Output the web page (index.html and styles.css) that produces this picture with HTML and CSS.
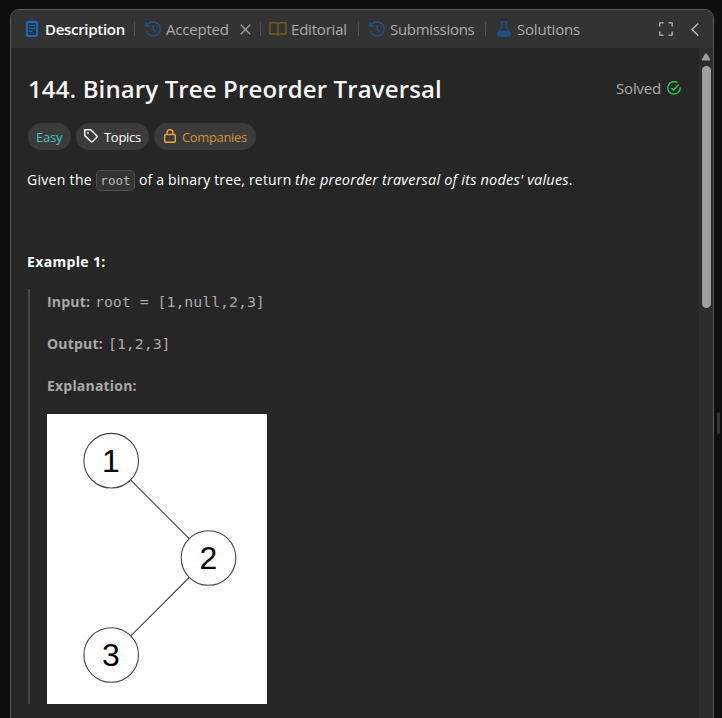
FILE: index.html
```html
<!DOCTYPE html>
<html lang="en">
<head>
<meta charset="utf-8">
<title>144. Binary Tree Preorder Traversal</title>
<link rel="stylesheet" href="styles.css">
</head>
<body>
<main class="panel">
  <header class="tabs">
    <div class="tab tab-description active">
      <svg width="12" height="16" viewBox="0 0 12 16" fill="none" stroke="#0a70dc"><rect x="1" y="1" width="10" height="14" rx="1.5" stroke-width="1.8"/><path d="M3 4.5h6M3 7.5h6M3 10.5h3.5" stroke-width="1.2"/></svg>
      <span>Description</span>
    </div>
    <div class="tab tab-accepted">
      <svg width="16" height="16" viewBox="0 0 16 16" fill="none" stroke="#20528a" stroke-width="1.5"><path d="M1.800 4.500C3.200 2 5.500 1 8.200 1a7 7 0 1 1-6.600 9.300M.8 1.200l.7 3.600 3.700.1M8.200 4.300v4l2.500 2.400"/></svg>
      <span>Accepted</span>
      <svg class="close" width="11" height="11" viewBox="0 0 11 11" fill="none" stroke="#9b9b9b" stroke-width="1.300"><path d="m.8.8 9.400 9.400M10.200.8.8 10.200"/></svg>
    </div>
    <div class="tab tab-editorial">
      <svg width="18" height="14" viewBox="0 0 18 14" fill="none" stroke="#765719" stroke-width="1.500" stroke-linejoin="round"><path d="M9 2.300C8.600 1.200 7.800.8 6.500.8H1v11.300h5.700c1.200 0 2 .3 2.300 1.100.3-.8 1.100-1.100 2.300-1.100H17V.8h-5.500C10.200.8 9.400 1.200 9 2.300zM9 2.300v10.900"/></svg>
      <span>Editorial</span>
    </div>
    <div class="tab tab-submissions">
      <svg width="16" height="16" viewBox="0 0 16 16" fill="none" stroke="#20528a" stroke-width="1.500"><path d="M1.800 4.500C3.200 2 5.500 1 8.200 1a7 7 0 1 1-6.600 9.300M.8 1.200l.7 3.600 3.700.1M8.200 4.300v4l2.500 2.400"/></svg>
      <span>Submissions</span>
    </div>
    <div class="tab tab-solutions">
      <svg width="14" height="16" viewBox="0 0 14 16" fill="none" stroke="#20528a" stroke-width="1.400"><path d="M3 .9h8M4.700 1v5.200L1 12.600c-.7 1.300 0 2.500 1.400 2.500h9.200c1.400 0 2.100-1.200 1.400-2.500L9.300 6.200V1"/><path d="M3 9.700h8l2.200 3.700-1.200 1.700H2L.8 13.400z" fill="#20528a" stroke="none"/></svg>
      <span>Solutions</span>
    </div>
    <div class="tools">
      <svg width="14" height="14" viewBox="0 0 14 14" fill="none" stroke="#a2a2a2" stroke-width="1.600"><path d="M.8 4.500V1.300Q.8.8 1.300.8h3.200M9.500.8h3.200q.5 0 .5.5v3.200M13.200 9.500v3.200q0 .5-.5.5H9.500M4.500 13.200H1.300q-.5 0-.5-.5V9.500"/></svg>
      <svg width="8" height="13" viewBox="0 0 8 13" fill="none" stroke="#bdbdbd" stroke-width="1.400"><path d="M7.200.5 1 6.500l6.200 6"/></svg>
    </div>
  </header>
  <div class="body">
    <article class="content">
      <div class="heading">
        <h1><span>144. Binary Tree Preorder Traversal</span></h1>
        <div class="solved"><span>Solved</span>
          <svg width="14" height="14" viewBox="0 0 14 14" fill="none" stroke="#28c244" stroke-width="1.500"><path d="M10.300 1.600A6.200 6.200 0 1 0 13.200 6.500M4.200 7l2.200 2.100 5.400-5.700"/></svg>
        </div>
      </div>
      <div class="pills">
        <div class="pill easy"><span>Easy</span></div>
        <div class="pill topics">
          <svg width="14" height="14" viewBox="0 0 14 14" fill="none" stroke="#f2f2f2" stroke-width="1.500" stroke-linejoin="round"><path d="M.8.8h6l6 6.100q.6.700 0 1.300L8.300 12.700q-.6.500-1.200 0L.8 6.600z"/><circle cx="4" cy="4" r=".9" fill="#f2f2f2" stroke="none"/></svg>
          <span>Topics</span>
        </div>
        <div class="pill companies">
          <svg width="12" height="14" viewBox="0 0 12 14" fill="none" stroke="#efa52b" stroke-width="1.400"><rect x=".7" y="5.500" width="10.600" height="7.700" rx="1"/><path d="M3 5.500V3.400a3 2.700 0 0 1 6 0v2.100"/></svg>
          <span>Companies</span>
        </div>
      </div>
      <p class="intro"><span class="t1">Given the</span><code>root</code><span class="t2">of a binary tree, return</span><em>the preorder traversal of its nodes' values</em>.</p>
      <p class="example">Example 1:</p>
      <section class="quote">
        <p><strong class="k-in">Input:</strong><span class="mono">root = [1,null,2,3]</span></p>
        <p><strong class="k-out">Output:</strong><span class="mono">[1,2,3]</span></p>
        <p><strong class="k-exp">Explanation:</strong></p>
        <svg class="tree" width="220" height="290" viewBox="0 0 220 290">
          <rect width="220" height="290" fill="#fff"/>
          <g fill="none" stroke="#444" stroke-width="1.100"><path d="m83.800 66.200 58.400 58.400M142.200 163.500 83.800 221.900"/><circle cx="64.200" cy="46.700" r="27.300"/><circle cx="161.500" cy="144" r="27.300"/><circle cx="64.200" cy="241" r="27.300"/></g>
          <g class="digits"><text x="64" y="58">1</text><text x="161.500" y="155">2</text><text x="64" y="252">3</text></g>
        </svg>
      </section>
    </article>
    <aside class="scroll">
      <svg width="10" height="8" viewBox="0 0 10 8"><path d="M4.200.8q.8-1 1.600 0L9 6q.7 1.500-.7 1.500H1.700Q.3 7.500 1 6z" fill="#9f9f9f"/></svg>
      <div class="thumb"></div>
    </aside>
  </div>
</main>
<div class="gutter"><div class="grip"></div></div>
</body>
</html>
```
FILE: styles.css
```css
* { box-sizing: border-box; }
body {
  margin: 0; height: 718px; overflow: hidden; display: flex;
  padding: 9px 0 0 10px; background: #0f0f0f; color: #f5f5f5;
  font: 15px/20px "Open Sans", "Noto Sans", sans-serif;
}
svg { display: block; flex: none; }
p, h1 { margin: 0; }
span, strong, em { white-space: pre; }
.panel {
  width: 704px; height: 720px; flex: none; overflow: hidden;
  border: 1px solid #5c5c5c; border-radius: 9px 9px 0 0; background: #262626;
}
.tabs { height: 38px; display: flex; align-items: center; background: #333; color: #ababab; }
.tab { display: flex; align-items: center; height: 14px; flex: none; font-size: 15px; }
.tab + .tab { border-left: 1px solid #505050; }
.tab-description { width: 123px; padding-left: 15px; gap: 7px; }
.active { color: #fff; font-weight: 600; }
.active span { letter-spacing: -.3px; }
.tab-accepted { width: 126px; padding-left: 10px; gap: 5px; }
.tab-accepted span { width: 69px; letter-spacing: -.2px; }
.tab-editorial { width: 98px; padding-left: 8px; gap: 4px; letter-spacing: -.2px; }
.tab-submissions { width: 127px; padding-left: 10px; gap: 5px; letter-spacing: -.3px; }
.tab-solutions { padding-left: 11px; gap: 6px; letter-spacing: -.2px; }
.tools { display: flex; align-items: center; gap: 18px; margin-left: auto; padding-right: 14px; }
.body { display: flex; height: 672px; }
.content { width: 688px; padding: 24px 0 0 17px; flex: none; }
.heading { display: flex; height: 34px; align-items: center; justify-content: space-between; padding-right: 18px; }
h1 { font-size: 24px; line-height: 34px; font-weight: 600; letter-spacing: .13px; }
.solved { display: flex; align-items: center; gap: 6px; color: #ababab; font-size: 15px; letter-spacing: -.2px; margin-top: -2px; }
.pills { display: flex; gap: 5px; margin-top: 17px; }
.pill { height: 27px; border-radius: 14px; background: #3b3b3b; display: flex; align-items: center; font-size: 13px; padding-top: 1px; }
.pill svg { margin-top: -2px; }
.easy { width: 43px; padding-left: 8px; color: #46c6c2; letter-spacing: -.2px; }
.topics { width: 73px; padding-left: 8px; gap: 6px; color: #fff; letter-spacing: -.3px; }
.companies { width: 102px; padding-left: 10px; gap: 6px; color: #d0933a; letter-spacing: -.35px; }
.intro { display: flex; align-items: center; margin: 19px 0 0 -1px; height: 22px; font-size: 14px; color: #fff; }
.t1 { width: 69px; letter-spacing: .3px; }
.intro code { width: 39px; height: 21px; border: 1px solid #505050; border-radius: 5px; background: #333; color: #b9b9b9; font: 12.6px/19px "DejaVu Sans Mono", monospace; text-align: center; margin-right: 4px; }
.t2 { width: 156px; letter-spacing: .18px; }
.intro em { font-size: 14.5px; letter-spacing: .2px; }
.example { margin: 61px 0 0 -1px; font-size: 14px; letter-spacing: .35px; font-weight: 700; color: #fff; }
.quote { margin-top: 17px; height: 415px; border-left: 2px solid #484848; padding: 3px 0 0 17px; color: #a9a9a9; font-size: 14px; }
.quote p { display: flex; height: 20px; margin-bottom: 22px; align-items: center; }
.quote strong { letter-spacing: .2px; }
.k-in { width: 48px; }
.k-out { width: 61px; }
.mono { font: 14.85px/20px "DejaVu Sans Mono", monospace; }
.quote .tree { margin-top: -4px; }
.digits { font: 32px "Liberation Sans", sans-serif; text-anchor: middle; fill: #000; }
.scroll { width: 14px; background: #2c2c2c; display: flex; flex-direction: column; align-items: center; padding-top: 5px; }
.thumb { width: 9px; height: 242px; margin-top: 5px; border-radius: 5px; background: #9f9f9f; }
.gutter { width: 8px; padding: 403px 0 0 3px; }
.grip { width: 3px; height: 22px; border-radius: 2px; background: #343434; }
```
